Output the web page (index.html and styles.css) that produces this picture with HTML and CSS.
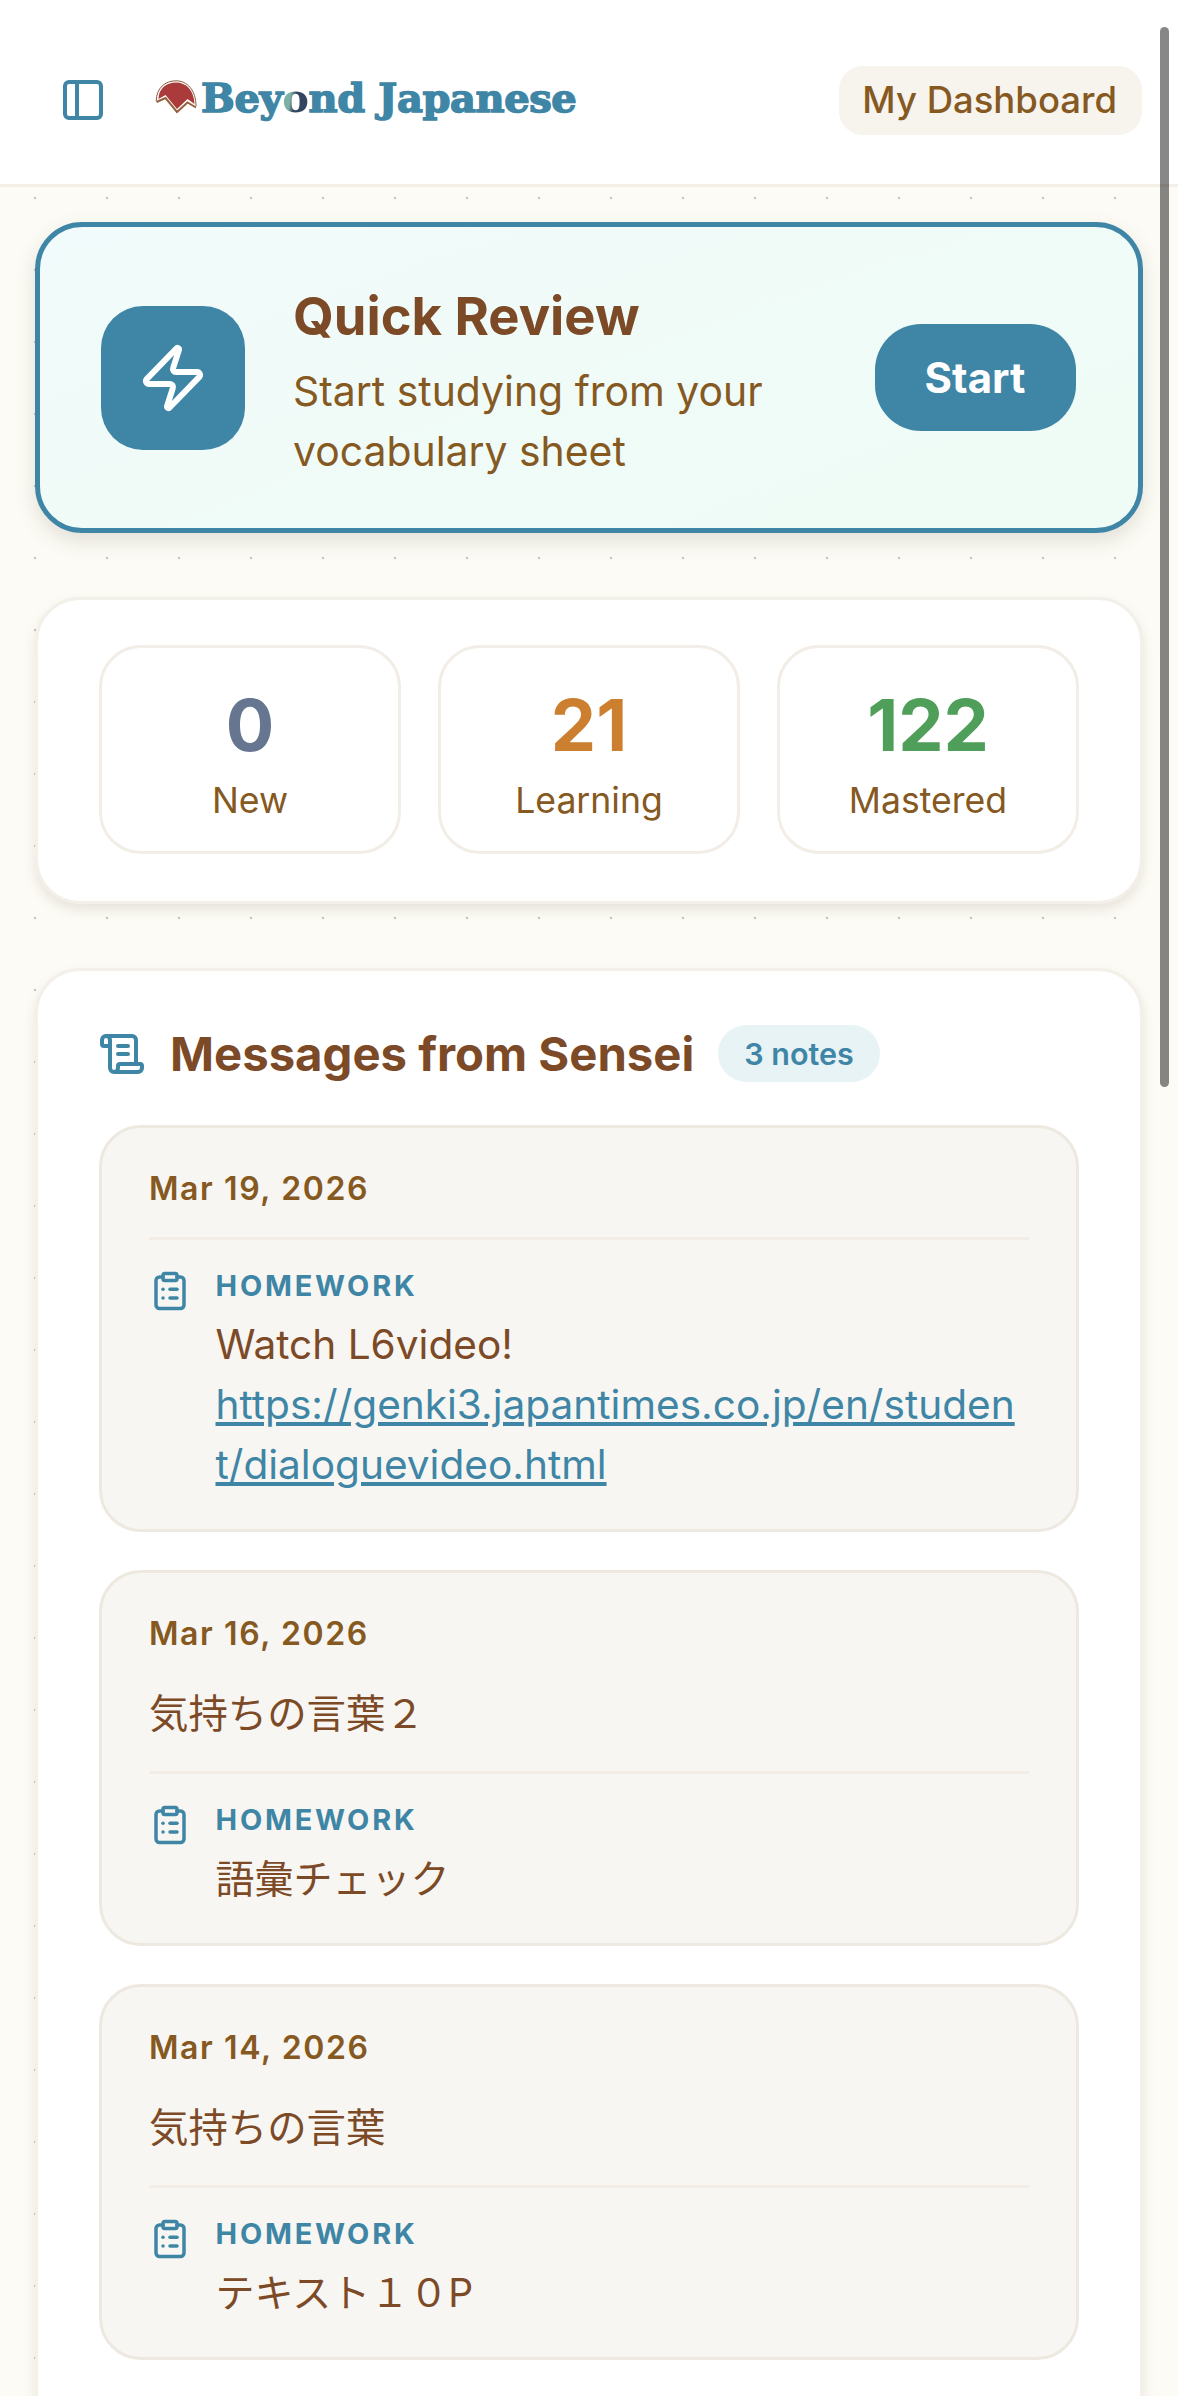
FILE: index.html
```html
<!DOCTYPE html>
<html lang="en">
<head>
    <meta charset="UTF-8">
    <meta name="viewport" content="width=device-width, initial-scale=1.0">
    <title>Beyond Japanese - Dashboard</title>
    <link rel="stylesheet" href="styles.css">
</head>
<body>

<header class="topbar">
    <svg class="icon sidebar-icon" viewBox="0 0 24 24"><rect x="3" y="3" width="18" height="18" rx="2"/><path d="M9 3v18"/></svg>
    <a class="logo" href="#">
        <svg class="logo-mark" viewBox="0 0 42 34">
            <path class="mark-red" d="M3.5 19C3.5 9 11 2.5 21 2.5S39 10 39.5 24L32.5 19 22 29 10.5 15Z"/>
            <path class="mark-arc" d="M1.2 21C1.5 8 10 .8 21 .8S41 10 41 26"/>
            <polyline class="mark-zig" points="1.5,22 10.5,18 22,32 32.5,22.5 41,27.5"/>
        </svg>
        <span class="logo-text">Bey<span class="logo-globe">o</span>nd Japanese</span>
    </a>
    <a class="dash-link" href="#">My Dashboard</a>
</header>

<main class="content">
    <section class="quick-card">
        <div class="quick-icon">
            <svg class="icon" viewBox="0 0 24 24"><path d="M4 14a1 1 0 0 1-.78-1.63l9.9-10.2a.5.5 0 0 1 .86.46l-1.92 6.02A1 1 0 0 0 13 10h7a1 1 0 0 1 .78 1.63l-9.9 10.2a.5.5 0 0 1-.86-.46l1.92-6.02A1 1 0 0 0 11 14z"/></svg>
        </div>
        <div class="quick-text">
            <h2>Quick Review</h2>
            <p>Start studying from your vocabulary sheet</p>
        </div>
        <button class="start-btn">Start</button>
    </section>

    <section class="panel stats">
        <div class="stat">
            <div class="stat-num num-new">0</div>
            <div class="stat-label">New</div>
        </div>
        <div class="stat">
            <div class="stat-num num-learning">21</div>
            <div class="stat-label">Learning</div>
        </div>
        <div class="stat">
            <div class="stat-num num-mastered">122</div>
            <div class="stat-label">Mastered</div>
        </div>
    </section>

    <section class="panel messages">
        <div class="messages-head">
            <svg class="icon scroll-icon" viewBox="0 0 24 24"><path d="M15 12h-5"/><path d="M15 8h-5"/><path d="M19 17V5a2 2 0 0 0-2-2H4"/><path d="M8 21h12a2 2 0 0 0 2-2v-1a1 1 0 0 0-1-1H11a1 1 0 0 0-1 1v1a2 2 0 1 1-4 0V5a2 2 0 1 0-4 0v2a1 1 0 0 0 1 1h3"/></svg>
            <h2>Messages from Sensei</h2>
            <span class="badge">3 notes</span>
        </div>

        <article class="note">
            <div class="note-date">Mar 19, 2026</div>
            <div class="homework">
                <svg class="icon clip-icon" viewBox="0 0 24 24"><rect x="8" y="2" width="8" height="4" rx="1"/><path d="M16 4h2a2 2 0 0 1 2 2v14a2 2 0 0 1-2 2H6a2 2 0 0 1-2-2V6a2 2 0 0 1 2-2h2"/><path d="M12 11h4"/><path d="M12 16h4"/><path d="M8 11h.01"/><path d="M8 16h.01"/></svg>
                <div>
                    <div class="hw-label">HOMEWORK</div>
                    <div class="hw-body latin">Watch L6video!<br><a href="#">https://genki3.japantimes.co.jp/en/student/dialoguevideo.html</a></div>
                </div>
            </div>
        </article>

        <article class="note">
            <div class="note-date">Mar 16, 2026</div>
            <p class="note-text">気持ちの言葉２</p>
            <div class="homework">
                <svg class="icon clip-icon" viewBox="0 0 24 24"><rect x="8" y="2" width="8" height="4" rx="1"/><path d="M16 4h2a2 2 0 0 1 2 2v14a2 2 0 0 1-2 2H6a2 2 0 0 1-2-2V6a2 2 0 0 1 2-2h2"/><path d="M12 11h4"/><path d="M12 16h4"/><path d="M8 11h.01"/><path d="M8 16h.01"/></svg>
                <div>
                    <div class="hw-label">HOMEWORK</div>
                    <div class="hw-body">語彙チェック</div>
                </div>
            </div>
        </article>

        <article class="note">
            <div class="note-date">Mar 14, 2026</div>
            <p class="note-text">気持ちの言葉</p>
            <div class="homework">
                <svg class="icon clip-icon" viewBox="0 0 24 24"><rect x="8" y="2" width="8" height="4" rx="1"/><path d="M16 4h2a2 2 0 0 1 2 2v14a2 2 0 0 1-2 2H6a2 2 0 0 1-2-2V6a2 2 0 0 1 2-2h2"/><path d="M12 11h4"/><path d="M12 16h4"/><path d="M8 11h.01"/><path d="M8 16h.01"/></svg>
                <div>
                    <div class="hw-label">HOMEWORK</div>
                    <div class="hw-body">テキスト１０P</div>
                </div>
            </div>
        </article>
    </section>
</main>

<div class="scroll-thumb"></div>

</body>
</html>
```

FILE: styles.css
```css
:root {
    --teal: #3f86a6;
    --brown: #7c4a26;
    --tan: #85591f;
    --line: #f2eee7;
    --note-bg: #f8f6f2;
}
* { box-sizing: border-box; }
html, body { height: 100%; }
body {
    margin: 0;
    height: 100vh;
    overflow: hidden;
    position: relative;
    background-color: #fcfbf5;
    color: var(--brown);
    font-family: Inter, "Noto Sans CJK JP", sans-serif;
}
h2, p { margin: 0; }
a { color: inherit; text-decoration: none; }
.icon {
    fill: none;
    stroke: var(--teal);
    stroke-width: 2;
    stroke-linecap: round;
    stroke-linejoin: round;
    flex-shrink: 0;
}

/* top bar */
.topbar {
    display: flex;
    align-items: center;
    height: 187px;
    padding: 16px 36px 0 59px;
    background-color: #fff;
    border-bottom: 3px solid #f3efe6;
}
.sidebar-icon { width: 48px; height: 48px; }
.logo {
    display: flex;
    align-items: center;
    margin-left: 48px;
    gap: 4px;
    margin-top: -4px;
}
.logo-mark { width: 42px; height: 34px; margin-top: -3px; }
.mark-red { fill: #ab3a3a; }
.mark-arc { fill: none; stroke: #8f5a3c; stroke-width: 1; }
.mark-zig { fill: none; stroke: #96603f; stroke-width: 2; }
.logo-text {
    font-family: "DejaVu Serif", serif;
    font-weight: 700;
    font-size: 40px;
    line-height: 48px;
    letter-spacing: -0.4px;
    color: var(--teal);
    -webkit-text-stroke: 1.5px var(--teal);
    white-space: nowrap;
}
.logo-globe {
    background: linear-gradient(100deg, #7fb0a5 35%, #34455f 50%);
    -webkit-background-clip: text;
    background-clip: text;
    color: transparent;
    -webkit-text-stroke: 0;
}
.dash-link {
    margin-left: auto;
    padding: 0 25px 0 23px;
    height: 69px;
    line-height: 69px;
    border-radius: 24px;
    background-color: #f7f3ed;
    color: var(--tan);
    font-size: 36.5px;
    font-weight: 500;
    white-space: nowrap;
}

/* page body */
.content {
    display: flex;
    flex-direction: column;
    gap: 64px;
    padding: 35px 35px 0;
    background-image: radial-gradient(circle, #c6c4bc 1px, transparent 1.6px);
    background-size: 72px 72px;
    background-position: -1px -25px;
}
.panel {
    background-color: #fff;
    border: 3px solid #f3efe9;
    border-radius: 45px;
    box-shadow: 0 6px 12px rgba(110, 95, 70, 0.14);
}

/* quick review */
.quick-card {
    display: flex;
    align-items: center;
    height: 311px;
    padding: 0 62.5px 0 60.5px;
    border: 5.5px solid var(--teal);
    border-radius: 47px;
    background: linear-gradient(160deg, #f1fbfb, #effcf5);
    box-shadow: 0 8px 20px rgba(90, 80, 60, 0.16);
}
.quick-icon {
    width: 144px;
    height: 144px;
    display: flex;
    align-items: center;
    justify-content: center;
    border-radius: 42px;
    background-color: var(--teal);
    flex-shrink: 0;
}
.quick-icon .icon { width: 72px; height: 72px; stroke: #fff; }
.quick-text { flex: 1; margin: 9px 0 0 48.5px; }
.quick-text h2 {
    font-size: 52.5px;
    line-height: 66px;
    font-weight: 700;
}
.quick-text p {
    margin-top: 12px;
    font-size: 40.9px;
    line-height: 60px;
    color: var(--tan);
    width: 500px;
}
.start-btn {
    width: 201px;
    height: 107px;
    border: 0;
    border-radius: 46px;
    background-color: var(--teal);
    color: #fff;
    font-family: inherit;
    font-size: 42px;
    font-weight: 700;
    flex-shrink: 0;
}

/* stats */
.stats {
    display: grid;
    grid-template-columns: repeat(3, 1fr);
    gap: 37px;
    padding: 45px 61px 47px;
}
.stat {
    height: 209px;
    border: 3px solid var(--line);
    border-radius: 42px;
    text-align: center;
    padding-top: 35px;
}
.stat-num {
    font-size: 72px;
    line-height: 84px;
    font-weight: 700;
}
.num-new { color: #667590; }
.num-learning { color: #cc7f2f; }
.num-mastered { color: #4f9e5a; }
.stat-label {
    margin-top: 10px;
    font-size: 35.6px;
    line-height: 48px;
    color: var(--tan);
}

/* messages */
.messages { padding: 54px 61px 100px; }
.messages-head {
    display: flex;
    align-items: center;
    height: 57px;
    margin-bottom: 43px;
}
.scroll-icon { width: 48px; height: 48px; margin-left: -1px; }
.messages-head h2 {
    margin-left: 24px;
    font-size: 47.25px;
    font-weight: 700;
    white-space: nowrap;
}
.badge {
    margin-left: 24px;
    height: 57px;
    line-height: 57px;
    padding: 0 26px;
    border-radius: 29px;
    background-color: #e8f3f6;
    color: var(--teal);
    font-size: 30.5px;
    font-weight: 600;
    white-space: nowrap;
}
.note {
    padding: 40px 47px 34px;
    margin-bottom: 38px;
    border: 3px solid #eee9e0;
    border-radius: 42px;
    background-color: var(--note-bg);
}
.note-date {
    font-size: 32px;
    line-height: 42px;
    font-weight: 600;
    letter-spacing: 1.6px;
    color: var(--tan);
}
.note-text {
    margin-top: 29px;
    font-size: 39.4px;
    line-height: 60px;
}
.homework {
    display: flex;
    gap: 24.5px;
    margin-top: 27px;
    padding-top: 26px;
    border-top: 3px solid var(--line);
}
.clip-icon { width: 42px; height: 42px; margin-top: 4px; }
.hw-label {
    font-size: 28.9px;
    line-height: 40px;
    font-weight: 700;
    letter-spacing: 2.8px;
    color: var(--teal);
}
.hw-body {
    margin-top: 9px;
    font-size: 39px;
    line-height: 60px;
    word-break: break-all;
}
.hw-body.latin { font-size: 40.6px; }
.hw-body a { color: var(--teal); text-decoration: underline; }

/* overlay scrollbar of the screenshot */
.scroll-thumb {
    position: absolute;
    top: 27px;
    left: 1160px;
    width: 9px;
    height: 1060px;
    border-radius: 5px;
    background-color: rgba(0, 0, 0, 0.47);
}
```
